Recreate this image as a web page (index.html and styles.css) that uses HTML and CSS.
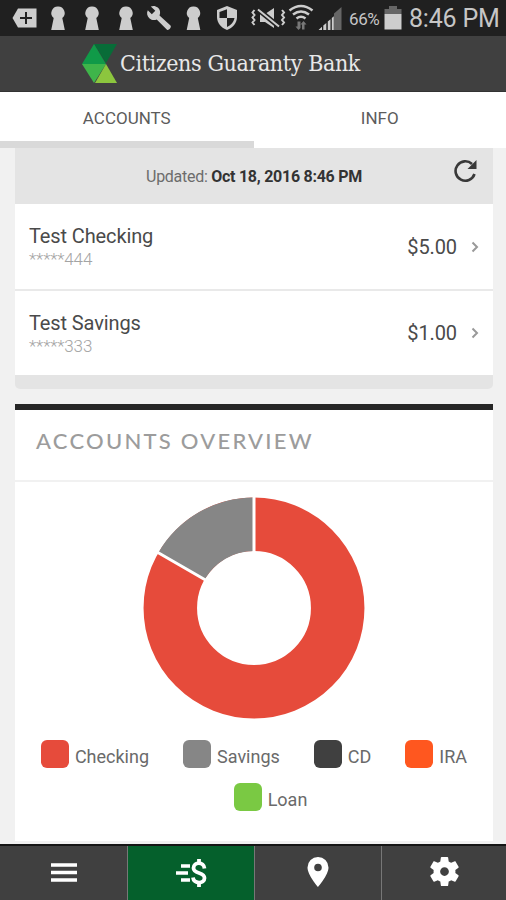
FILE: index.html
```html
<!DOCTYPE html>
<html lang="en">
<head>
<meta charset="utf-8">
<title>Citizens Guaranty Bank</title>
<link rel="stylesheet" href="styles.css">
</head>
<body>
<div class="status">
  <svg class="status-icons" width="345" height="36" viewBox="0 0 345 36" fill="#cdcdcd">
    <defs><path id="key" d="M8 0a6.500 6.500 0 0 1 4.300 11.500L14.800 23.500H1.200L3.700 11.500A6.500 6.500 0 0 1 8 0z"/></defs>
    <path d="M18 8.500h18.500v19H18l-5.500-9.500z"/>
    <path d="M26 12v12M20 18h12" stroke="#222" stroke-width="2"/>
    <use href="#key" x="50" y="6.500"/><use href="#key" x="84" y="6.500"/><use href="#key" x="118" y="6.500"/>
    <path d="M170.500 25.500 159.500 15.500c1.300-3 .5-6-1.700-7.900-2.200-2-5-2.100-7-1.100l4.500 4.200-3.500 3.600-4-4c-1.500 3-.6 6 1.500 7.900 2.200 2 5 2.300 7.400 1.300l10.300 10.200c1.500 1.200 5-2.400 3.500-4.200z"/>
    <use href="#key" x="185.500" y="6.500"/>
    <path d="M227 6l10 4v7c0 6-4.300 11-10 13-5.700-2-10-7-10-13v-7z"/>
    <path d="M227 9.300V18h7.500c-.8 4.200-3.700 7.500-7.500 9V18h-7.500v-6z" fill="#222"/>
    <path d="M260 14h5l9-6v20l-9-6h-5z"/>
    <path d="M257.500 9l22 18" stroke="#222" stroke-width="5"/>
    <path d="M258 9.500l21 17M254.500 10l-2 2.500 2 2.500-2 2.500 2 2.500-2 2.500 2 2.500M282 10l2 2.500-2 2.500 2 2.500-2 2.500 2 2.500-2 2.500" stroke="#cdcdcd" stroke-width="2" fill="none"/>
    <path d="M289.500 10.500q11.500-9 23 0M293 14.500q8-6 16 0M296.500 18.500q4.500-3.500 9 0" stroke="#cdcdcd" stroke-width="2.500" fill="none"/>
    <path d="M297.500 21.500v5h-2l3 3.500 2-2v-6.500zM302 29.500v-5h-1.500l3-3.500 3 3.500h-2v5z" fill="#777"/>
    <path d="M334 13.500 341.500 7v23H334z" fill="#666"/>
    <path d="M318.500 30l3.500-3.200V30zM323.300 30v-4.500l3-2.600V30zM327.800 30v-8.500l2.700-2.300V30zM331.800 30V18l2-1.800V30z"/>
  </svg>
  <span class="percent">66%</span>
  <svg class="battery" width="18" height="24" viewBox="0 0 18 24"><path d="M5 0h8v3h4.500v5H.5V3H5z" fill="#666"/><path d="M.5 8h17v15.500H.5z" fill="#cdcdcd"/></svg>
  <span class="clock">8:46 PM</span>
</div>
<header class="brand">
  <svg width="36" height="42" viewBox="0 0 36 42"><path d="M12 1h23L24 20z" fill="#086c38"/><path d="M12 1 0 21h24z" fill="#109a48"/><path d="M0 21h24L12 40z" fill="#3fb54a"/><path d="M24 21 35 40H13z" fill="#8cc63e"/></svg>
  <span class="wordmark">Citizens Guaranty Bank</span>
</header>
<nav class="tabs"><div class="tab active">ACCOUNTS</div><div class="tab">INFO</div></nav>
<main>
  <section class="accounts">
    <div class="updated"><span>Updated: <b>Oct 18, 2016 8:46 PM</b></span>
      <svg class="refresh" width="24" height="24" viewBox="0 0 24 24"><path d="M21.500 15A9.700 9.700 0 1 1 19 5" fill="none" stroke="#393939" stroke-width="2.600"/><path d="M23.500 1v9h-9z" fill="#393939"/></svg>
    </div>
    <div class="row"><div><div class="name">Test Checking</div><div class="number">*****444</div></div><span class="amount">$5.00</span><svg width="8" height="12" viewBox="0 0 8 12"><path d="M1.500 1.500 6 6l-4.500 4.500" fill="none" stroke="#999" stroke-width="2"/></svg></div>
    <div class="row"><div><div class="name">Test Savings</div><div class="number">*****333</div></div><span class="amount">$1.00</span><svg width="8" height="12" viewBox="0 0 8 12"><path d="M1.500 1.500 6 6l-4.500 4.500" fill="none" stroke="#999" stroke-width="2"/></svg></div>
  </section>
  <section class="overview">
    <h2>ACCOUNTS OVERVIEW</h2>
    <svg class="chart" width="224" height="224" viewBox="-112 -112 224 224">
      <circle r="83.700" fill="none" stroke="#e64b3b" stroke-width="53.500"/>
      <path d="M0-110.500A110.500 110.500 0 0 0-95.700-55.250L-49.400-28.500A57 57 0 0 1 0-57z" fill="#868686"/>
      <path d="M0-112v56M-97-56l48.500 28" stroke="#fff" stroke-width="3"/>
    </svg>
    <div class="legend">
      <span class="item"><i class="swatch checking"></i>Checking</span>
      <span class="item"><i class="swatch savings"></i>Savings</span>
      <span class="item"><i class="swatch cd"></i>CD</span>
      <span class="item"><i class="swatch ira"></i>IRA</span>
      <span class="item last"><i class="swatch loan"></i>Loan</span>
    </div>
  </section>
</main>
<nav class="bottom">
  <div class="cell"><svg width="28" height="20" viewBox="0 0 28 20"><path d="M1 2h26M1 9.500h26M1 17h26" stroke="#fff" stroke-width="3.500"/></svg></div>
  <div class="cell selected"><svg width="32" height="30" viewBox="0 0 32 30" fill="none" stroke="#fff"><path d="M6 8h9M1 15h12M6 22h9" stroke-width="3.500"/><path d="M29.500 10.500C29 3.500 18.500 3.500 18.500 10c0 6.500 11 3.500 11 10 0 6.500-11 6-11.500-.5M24 1v4.500M24 24.500V29" stroke-width="3.800"/></svg></div>
  <div class="cell"><svg class="pin" width="22" height="30" viewBox="0 0 22 30"><path d="M11 0A10.500 10.500 0 0 0 .5 10.500C.5 18 11 30 11 30s10.500-12 10.500-19.500A10.500 10.500 0 0 0 11 0zm0 14.300a3.800 3.800 0 1 1 0-7.600 3.800 3.800 0 0 1 0 7.600z" fill="#fff"/></svg></div>
  <div class="cell"><svg class="gear" width="35" height="35" viewBox="0 0 24 24"><path fill="#fff" d="M19.430 12.980c.04-.32.07-.64.07-.98s-.03-.66-.07-.98l2.110-1.650c.19-.15.24-.42.12-.64l-2-3.460c-.12-.22-.39-.3-.61-.22l-2.490 1c-.52-.4-1.080-.73-1.690-.98l-.38-2.650A.488.488 0 0 0 14 2h-4c-.25 0-.46.18-.49.42l-.38 2.650c-.61.25-1.170.59-1.690.98l-2.490-1c-.23-.09-.49 0-.61.22l-2 3.460c-.13.22-.07.49.12.64l2.110 1.650c-.04.32-.07.65-.07.98s.03.66.07.98l-2.110 1.650c-.19.15-.24.42-.12.64l2 3.460c.12.22.39.3.61.22l2.490-1c.52.4 1.080.73 1.690.98l.38 2.650c.03.24.24.42.49.42h4c.25 0 .46-.18.49-.42l.38-2.650c.61-.25 1.170-.59 1.690-.98l2.490 1c.23.09.49 0 .61-.22l2-3.460c.12-.22.07-.49-.12-.64zM12 15a3 3 0 1 1 0-6 3 3 0 0 1 0 6z"/></svg></div>
</nav>
</body>
</html>
```
FILE: styles.css
```css
* { box-sizing: border-box; }
body { margin: 0; width: 506px; height: 900px; overflow: hidden; display: flex; flex-direction: column; background: #f1f1f1; color: #4a4a4a; font-family: Roboto, sans-serif; }
svg { display: block; flex: none; }
.status { height: 36px; flex: none; display: flex; background: #202020; color: #c6c6c6; white-space: nowrap; }
.percent { width: 35px; margin-left: 4px; font-size: 17px; line-height: 38px; letter-spacing: -.4px; }
.battery { margin-top: 6px; }
.clock { margin-left: 7px; font-size: 25px; line-height: 37px; letter-spacing: -.2px; }
.brand { height: 56px; flex: none; display: flex; align-items: center; padding-left: 82px; background: #404040; border-bottom: 1px solid #333; }
.wordmark { margin: -2px 0 0 2px; color: #e8e8e8; font: 23px/30px "DejaVu Serif Condensed", "DejaVu Serif", serif; letter-spacing: -.4px; white-space: nowrap; }
.tabs { height: 56px; flex: none; display: flex; background: #fff; }
.tab { width: 253px; text-align: center; font-size: 17px; line-height: 53px; color: #5c5c5c; }
.tab.active { width: 254px; border-bottom: 7px solid #d9d9d9; }
main { flex: 1; padding: 0 13px 3px 15px; display: flex; flex-direction: column; }
.accounts { height: 241px; flex: none; background: #e4e4e4; border-radius: 0 0 5px 5px; }
.updated { position: relative; height: 56px; text-align: center; font-size: 16px; line-height: 57px; letter-spacing: -.27px; color: #6c6c6c; }
.updated b { color: #333; font-weight: 700; }
.refresh { position: absolute; right: 16px; top: 11px; }
.row { height: 85px; display: flex; align-items: center; padding: 0 14px; background: #fff; }
.row + .row { height: 86px; border-top: 2px solid #e9e9e9; }
.row .amount { margin-left: auto; margin-right: 14px; font-size: 20px; letter-spacing: -.1px; }
.name { padding-top: 1px; font-size: 20px; line-height: 24px; letter-spacing: -.12px; }
.number { font-size: 17px; line-height: 22px; color: #a4a4a4; font-weight: 300; letter-spacing: -.15px; }
.overview { flex: 1; margin-top: 15px; background: #fff; border-top: 6px solid #262626; }
h2 { margin: 0; height: 72px; padding-left: 21px; border-bottom: 2px solid #f1f1f1; color: #9c9c9c; font: 500 22px/62px Lato, sans-serif; letter-spacing: 2.250px; }
.chart { margin: 14px 0 0 127px; }
.legend { display: flex; flex-wrap: wrap; justify-content: center; column-gap: 34px; row-gap: 15px; margin-top: 20px; font-size: 18px; color: #6a6a6a; }
.item { display: flex; height: 28px; line-height: 34px; }
.item.last { margin-left: 33px; }
.swatch { width: 28px; height: 28px; margin-right: 6px; border-radius: 6px; }
.checking { background: #e64b3b; } .savings { background: #868686; } .cd { background: #404040; } .ira { background: #ff571f; } .loan { background: #7ac943; }
.bottom { height: 56px; flex: none; display: flex; background: #404040; border-top: 2px solid #151515; }
.cell { flex: 0 0 127px; display: flex; align-items: center; justify-content: center; border-right: 1px solid #777; }
.cell:first-child { flex-basis: 128px; }
.cell:last-child { flex: 1; border: 0; }
.selected { background: #05602c; }
.pin { margin-top: -3px; }
.gear { margin-top: -3px; }
```
